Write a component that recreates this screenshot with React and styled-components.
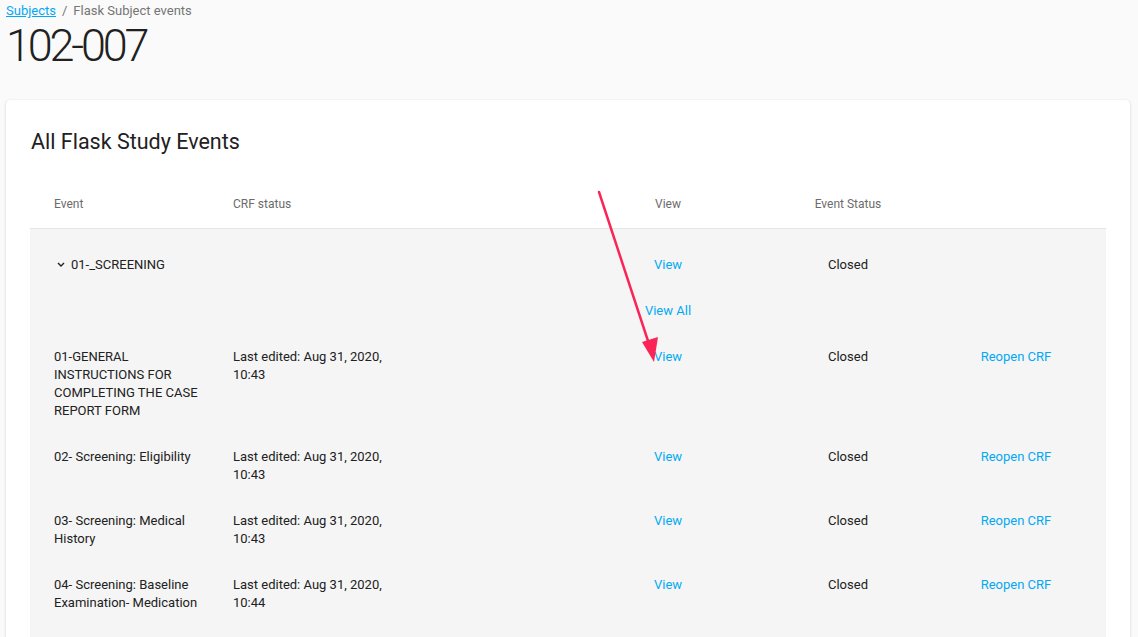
import React from 'react'
import styled, { createGlobalStyle } from 'styled-components'

const GlobalStyle = createGlobalStyle`
  body {
    margin: 0;
    background: #fafafa;
    font-family: Roboto, 'Liberation Sans', sans-serif;
    color: #212121;
  }
`

const Page = styled.div`
  position: relative;
  padding: 1px 8px 0 6px;
  height: 636px;
  overflow: hidden;
`
const Breadcrumb = styled.div`
  font-size: 13px;
  line-height: 20px;
  color: #757575;
`
const Crumb = styled.a`
  color: #03a9f4;
  text-decoration: underline;
`
const Sep = styled.span`
  margin: 0 6px;
`
const Title = styled.h1`
  margin: 3px 0 0;
  font-size: 45px;
  font-weight: 300;
  line-height: 44px;
  letter-spacing: -3.2px;
  color: #212121;
`
const Card = styled.div`
  margin-top: 32px;
  background: #fff;
  border-radius: 4px;
  box-shadow: 0 1px 3px rgba(0, 0, 0, 0.16), 0 0 1px rgba(0, 0, 0, 0.1);
  padding: 24px 24px 0;
  min-height: 600px;
`
const CardTitle = styled.h2`
  margin: 0 0 0 1px;
  font-size: 21.5px;
  font-weight: 400;
  line-height: 35px;
  color: #212121;
`
const Table = styled.div`
  margin-top: 22px;
`
const Row = styled.div`
  display: grid;
  grid-template-columns: 179px 357px 204px 156px 180px;
  align-items: start;
  padding: ${p => (p.$head ? '14px 0 15px' : '14px 0')};
  background: ${p => (p.$head ? '#fff' : '#f5f5f5')};
  border-bottom: ${p => (p.$head ? '1px solid #e6e6e6' : 'none')};
  font-size: ${p => (p.$head ? '12px' : '13px')};
  line-height: 18px;
  color: ${p => (p.$head ? '#6b6b6b' : '#212121')};
`
const Cell = styled.div`
  padding-left: ${p => (p.$center ? '0' : '24px')};
  text-align: ${p => (p.$center ? 'center' : 'left')};
  padding-right: ${p => (p.$center ? '0' : '8px')};
`
const Edited = styled.div`
  width: 160px;
`
const Link = styled.a`
  color: #03a9f4;
  cursor: pointer;
`
const Group = styled.div`
  display: flex;
  align-items: center;
  gap: 6px;
  padding-left: 3px;
`
const Body = styled.div`
  background: #f5f5f5;
  padding: 13px 0 40px;
`
const Arrow = styled.svg`
  position: absolute;
  left: 0;
  top: 0;
  pointer-events: none;
`

const rows = [
  { name: '01-GENERAL INSTRUCTIONS FOR COMPLETING THE CASE REPORT FORM', time: '10:43' },
  { name: '02- Screening: Eligibility', time: '10:43' },
  { name: '03- Screening: Medical History', time: '10:43' },
  { name: '04- Screening: Baseline Examination- Medication', time: '10:44' },
]

const App = () => {
  return (
    <Page>
      <GlobalStyle />
      <Breadcrumb>
        <Crumb href="#">Subjects</Crumb>
        <Sep>/</Sep>
        Flask Subject events
      </Breadcrumb>
      <Title>102-007</Title>
      <Card>
        <CardTitle>All Flask Study Events</CardTitle>
        <Table>
          <Row $head>
            <Cell>Event</Cell>
            <Cell>CRF status</Cell>
            <Cell $center>View</Cell>
            <Cell $center>Event Status</Cell>
            <Cell $center></Cell>
          </Row>
          <Body>
            <Row>
              <Cell>
                <Group>
                  <svg width="8" height="6" viewBox="0 0 8 6">
                    <polyline points="1,1 4,4 7,1" fill="none" stroke="#212121" strokeWidth="1.4" />
                  </svg>
                  01-_SCREENING
                </Group>
              </Cell>
              <Cell></Cell>
              <Cell $center><Link>View</Link></Cell>
              <Cell $center>Closed</Cell>
              <Cell $center></Cell>
            </Row>
            <Row>
              <Cell></Cell>
              <Cell></Cell>
              <Cell $center><Link>View All</Link></Cell>
              <Cell $center></Cell>
              <Cell $center></Cell>
            </Row>
            {rows.map(r => (
              <Row key={r.name}>
                <Cell>{r.name}</Cell>
                <Cell><Edited>Last edited: Aug 31, 2020, {r.time}</Edited></Cell>
                <Cell $center><Link>View</Link></Cell>
                <Cell $center>Closed</Cell>
                <Cell $center><Link>Reopen CRF</Link></Cell>
              </Row>
            ))}
          </Body>
        </Table>
      </Card>
      <Arrow width="1138" height="637" viewBox="0 0 1138 637">
        <line x1="599" y1="192" x2="649" y2="344" stroke="#fb2456" strokeWidth="2.5" strokeLinecap="round" />
        <polygon points="654,362 642,342 658,337" fill="#fb2456" />
      </Arrow>
    </Page>
  )
}

export default App
